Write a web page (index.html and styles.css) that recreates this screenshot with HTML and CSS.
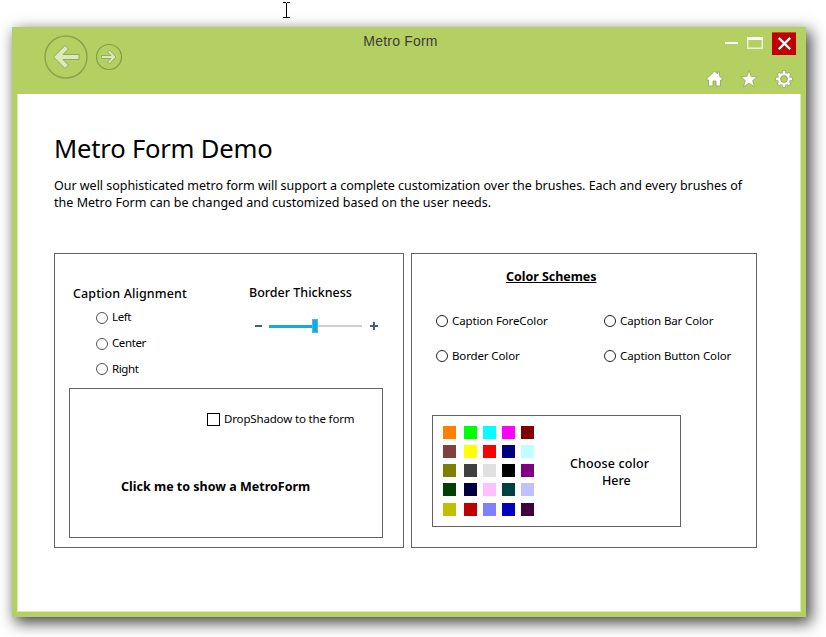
FILE: index.html
```html
<!DOCTYPE html>
<html lang="en">
<head>
<meta charset="utf-8">
<title>Metro Form</title>
<link rel="stylesheet" href="styles.css">
</head>
<body>
<svg class="cursor" width="9" height="17" viewBox="0 0 9 17" shape-rendering="crispEdges"><path d="M1 .5h3M5 .5h3M4.500 1v15M1 15.500h3M5 15.500h3" fill="none" stroke="#000"/></svg>
<div class="window">
  <header class="bar">
    <nav class="history">
      <svg width="44" height="44" viewBox="0 0 44 44"><circle cx="22" cy="22" r="21" fill="none" stroke="#8ba54b" stroke-width="1.500"/><path d="M9.500 22 21 10.500l3.500 3.500-5.500 5.500h16v5H19l5.500 5.500-3.500 3.500z" fill="#dce9bd" stroke="#8fa75a"/></svg>
      <svg width="28" height="28" viewBox="0 0 28 28"><circle cx="14" cy="14" r="12.500" fill="none" stroke="#829d43" stroke-width="1.200"/><path d="M21 14l-6.500 7-2-2 3.500-3.500H6.500v-3H16L12.500 9l2-2z" fill="#dce9bd" stroke="#8fa75a" stroke-width=".9"/></svg>
    </nav>
    <div class="title"><span class="t-title">Metro Form</span></div>
    <div class="controls">
      <div class="sys">
        <svg width="40" height="23" viewBox="0 0 40 23"><path d="M0 11h13" stroke="#fff" stroke-width="2"/><path d="M22 5h16v12H22zM23.500 8v7.500h13V8z" fill="#e9f1d5" fill-rule="evenodd"/><path d="M22 5h16v3H22z" fill="#fff"/></svg>
        <svg class="close" width="24" height="23" viewBox="0 0 24 23"><path d="M6.500 5l12 12M18.500 5l-12 12" stroke="#fff" stroke-width="2.500"/></svg>
      </div>
      <div class="tools">
        <svg width="18" height="18" viewBox="0 0 18 18"><path d="M9.500 1 1.500 9v1h2v6H8v-5h3v5h4.500v-6h2V9l-3-3V2h-2v2z" fill="#fff" stroke="#93ab5c" stroke-width=".9"/></svg>
        <svg width="18" height="18" viewBox="0 0 18 18"><path d="M9 .5l2.200 6.100h6.400l-5 4 1.900 6.200L9 13.200l-5.500 3.600 1.900-6.200-5-4h6.400z" fill="#fff" stroke="#93ab5c" stroke-width=".8"/></svg>
        <svg width="18" height="18" viewBox="0 0 18 18"><g stroke="#93ab5c" stroke-width="4"><path d="M9 .5v17M.5 9h17M3 3l12 12M15 3 3 15"/></g><circle cx="9" cy="9" r="6.300" fill="#fff" stroke="#93ab5c" stroke-width=".8"/><path d="M9 1v16M1 9h16M3.500 3.500l11 11M14.500 3.500l-11 11" stroke="#fff" stroke-width="2.500"/><circle cx="9" cy="9" r="3.400" fill="#b4d062" stroke="#93ab5c"/></svg>
      </div>
    </div>
  </header>
  <main class="content">
    <h1><span class="t-h1">Metro Form Demo</span></h1>
    <p><span class="t-p1">Our well sophisticated metro form will support a complete customization over the brushes. Each and every brushes of</span><br><span class="t-p2">the Metro Form can be changed and customized based on the user needs.</span></p>
    <div class="panels">
      <section class="panel left">
        <div class="options">
          <div class="alignment">
            <h2><span class="t-align">Caption Alignment</span></h2>
            <div class="radio"><i></i><span>Left</span></div>
            <div class="radio"><i></i><span>Center</span></div>
            <div class="radio last"><i></i><span>Right</span></div>
          </div>
          <div class="thickness">
            <h2><span>Border Thickness</span></h2>
            <div class="slider"><i class="minus"></i><i class="fill"></i><i class="thumb"></i><i class="rest"></i><svg width="8" height="8" viewBox="0 0 8 8"><path d="M4 0v8M0 4h8" stroke="#4b6078" stroke-width="2"/></svg></div>
          </div>
        </div>
        <div class="box actions">
          <div class="check"><i></i><span>DropShadow to the form</span></div>
          <div class="show"><span>Click me to show a MetroForm</span></div>
        </div>
      </section>
      <section class="panel right">
        <h3><span>Color Schemes</span></h3>
        <div class="schemes">
          <div class="radio dark"><i></i><span>Caption ForeColor</span></div>
          <div class="radio dark"><i></i><span>Caption Bar Color</span></div>
          <div class="radio dark"><i></i><span>Border Color</span></div>
          <div class="radio dark"><i></i><span>Caption Button Color</span></div>
        </div>
        <div class="box picker">
          <div class="swatches">
            <i style="background:#ff8000"></i><i style="background:#0f0"></i><i style="background:#0ff"></i><i style="background:#f0f"></i><i style="background:#800000"></i>
            <i style="background:#804040"></i><i style="background:#ff0"></i><i style="background:#f00"></i><i style="background:#000080"></i><i style="background:#c0ffff"></i>
            <i style="background:#808000"></i><i style="background:#404040"></i><i style="background:#e0e0e0"></i><i style="background:#000"></i><i style="background:#800080"></i>
            <i style="background:#004000"></i><i style="background:#000040"></i><i style="background:#ffc0ff"></i><i style="background:#004040"></i><i style="background:#c0c0ff"></i>
            <i style="background:#c0c000"></i><i style="background:#c00000"></i><i style="background:#8080ff"></i><i style="background:#0000c0"></i><i style="background:#400040"></i>
          </div>
          <div class="choose"><span class="t-choose">Choose color</span><span class="here">Here</span></div>
        </div>
      </section>
    </div>
  </main>
</div>
</body>
</html>
```
FILE: styles.css
```css
* { box-sizing: border-box; }
body { margin: 0; width: 826px; height: 637px; overflow: hidden; background: #fff; color: #000; font-family: "Noto Sans", "Open Sans", sans-serif; }
i { display: block; flex: none; }
svg { display: block; flex: none; }
span { white-space: nowrap; }
h1, h2, h3, p { margin: 0; font-weight: 400; }
.cursor { margin: 2px 0 0 282px; }
.window { width: 794px; height: 590px; margin: 8px 0 0 12px; background: #b4d062; box-shadow: 4px 5px 14px 1px rgba(0,0,0,.72); display: flex; flex-direction: column; }
.bar { height: 67px; display: grid; grid-template-columns: 230px 1fr 230px; flex: none; }
.history { display: flex; align-items: center; gap: 7px; height: 44px; margin: 8px 0 0 32px; }
.title { text-align: center; padding-top: 5px; font: 14px/18px "Liberation Sans", sans-serif; color: #3c3c3c; margin-left: -17px; }
.t-title { letter-spacing: .2px; }
.controls { display: flex; flex-direction: column; align-items: flex-end; padding: 5px 10px 0 0; }
.sys { display: flex; gap: 7px; }
.close { background: #c00000; border-top: 1px solid #c65216; }
.tools { display: flex; gap: 17px; margin: 15px 3px 0 0; }
.content { flex: 1; margin: 0 5px 5px; border: solid #dceab8; border-width: 0 1px 1px; background: #fff; padding: 0 0 0 36px; }
h1 { padding-top: 36px; font-size: 25.6px; line-height: 37px; height: 83px; letter-spacing: -.2px; }
p { font-size: 12.5px; line-height: 17px; height: 76px; }
.t-p1 { letter-spacing: -.025px; }
.t-p2 { letter-spacing: .025px; }
.panels { display: flex; gap: 7px; }
.panel { height: 295px; border: 1px solid #636363; }
.left { width: 350px; }
.right { width: 346px; }
.options { display: flex; height: 134px; }
.alignment { width: 176px; padding: 31px 0 0 18px; }
h2 { font-size: 12.500px; font-weight: 500; line-height: 18px; }
.t-align { letter-spacing: .12px; }
.radio { display: flex; align-items: center; gap: 4px; font-size: 11.500px; line-height: 16px; height: 16px; letter-spacing: -.13px; }
.radio i { width: 12px; height: 12px; border: 1px solid #555; border-radius: 50%; }
.radio.dark i { border-color: #222; }
.alignment .radio { margin: 6px 0 0 23px; letter-spacing: -.4px; }
.alignment .radio i { margin-top: 1px; }
.alignment .radio + .radio { margin-top: 10px; }
.alignment .last i { margin-top: 0; }
.thickness { padding: 30px 0 0 18px; }
.slider { display: flex; align-items: center; height: 14px; margin: 17px 0 0 6px; }
.minus { width: 7px; height: 2px; background: #4b6078; margin-right: 7px; }
.fill { width: 43px; height: 3px; background: #18a7e0; }
.thumb { width: 6px; height: 14px; background: #18a7e0; border: 1px solid #42bdea; }
.rest { width: 44px; height: 2px; background: #d0d0d0; margin-right: 8px; }
.box { border: 1px solid #636363; }
.actions { width: 314px; height: 150px; margin-left: 14px; padding-top: 21px; }
.check { display: flex; align-items: center; gap: 4px; font-size: 11.500px; line-height: 18px; margin-left: 137px; letter-spacing: -.16px; }
.check i { width: 13px; height: 13px; border: 1px solid #000; }
.show { font-size: 12.500px; line-height: 18px; font-weight: 700; margin: 50px 0 0 51px; }
h3 { font-size: 12.500px; line-height: 18px; font-weight: 700; margin: 14px 0 0 94px; letter-spacing: -.05px; }
h3 span { text-decoration: underline; text-underline-offset: 1px; }
.schemes { display: grid; grid-template-columns: 168px 1fr; row-gap: 19px; margin: 27px 0 0 24px; }
.picker { width: 249px; height: 112px; margin: 51px 0 0 20px; padding: 10px; display: flex; }
.swatches { display: grid; grid-template-columns: 21px 19px 19px 19px 13px; grid-template-rows: 19px 19px 19px 20px 13px; }
.swatches i { width: 13px; height: 13px; }
.choose { font-size: 12.500px; font-weight: 500; line-height: 17px; margin: 29px 0 0 36px; display: flex; flex-direction: column; align-items: flex-start; }
.t-choose { letter-spacing: .12px; }
.here { margin-left: 32px; }
```
